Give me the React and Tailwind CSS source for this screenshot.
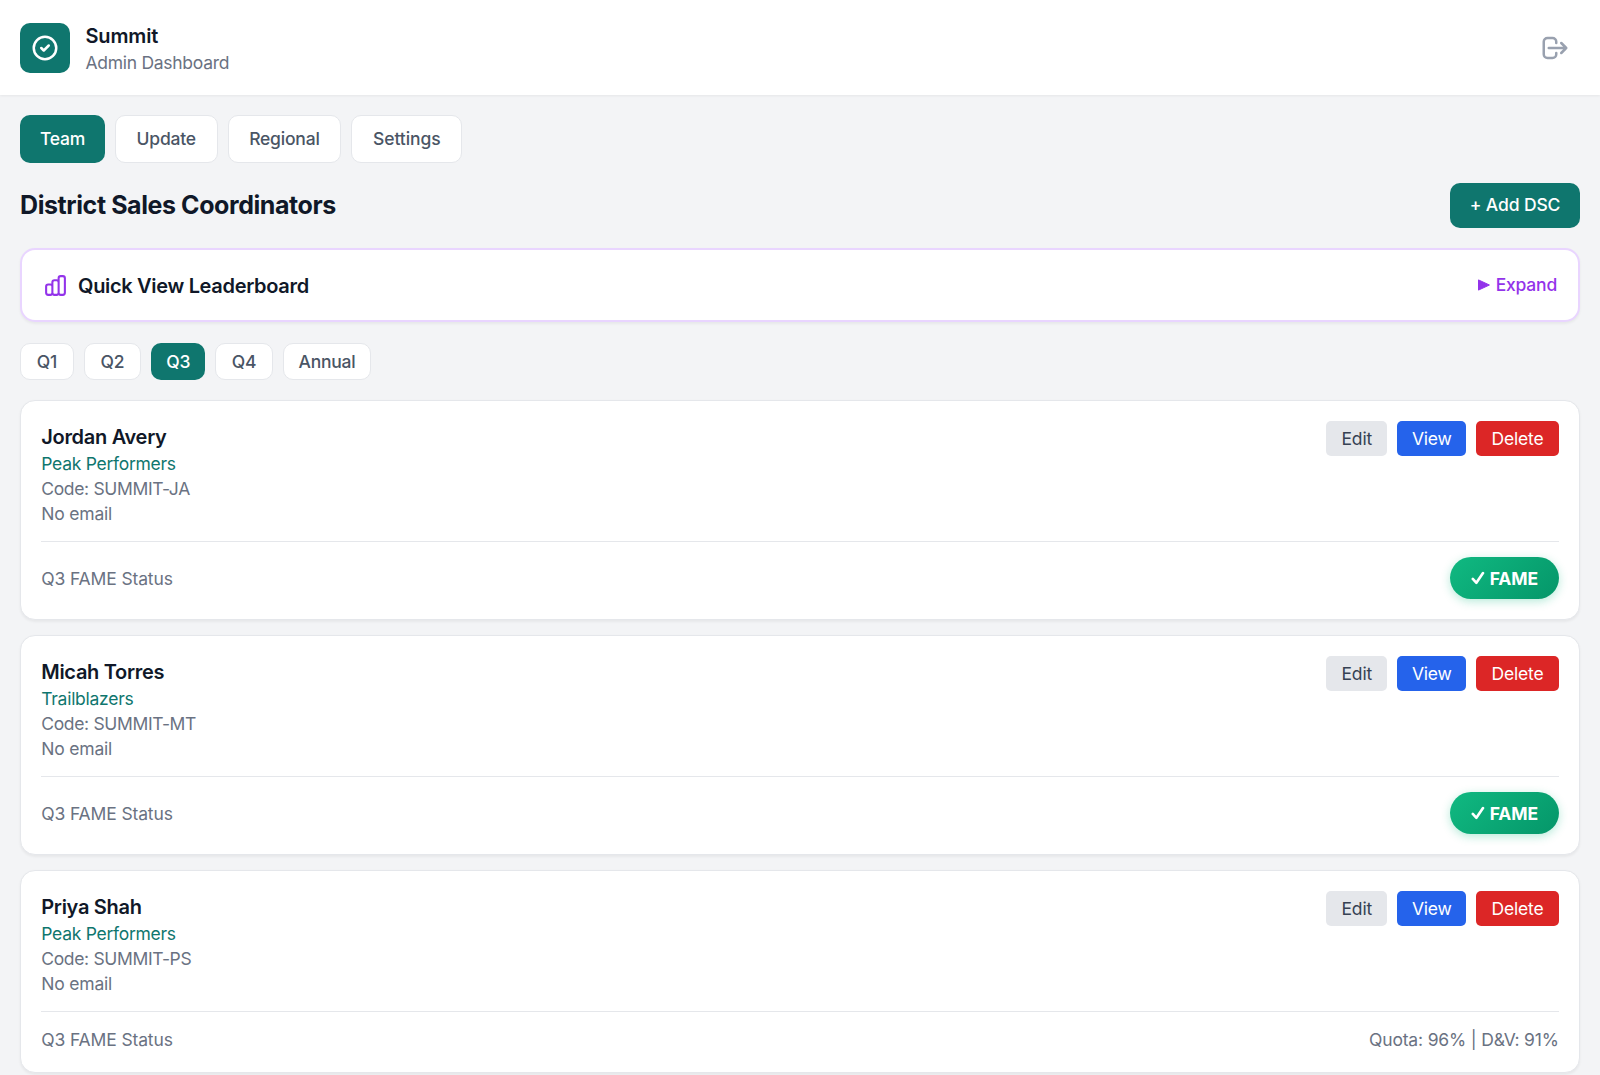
import React, { useState } from "react";

const tabs = [
  { name: "Team", width: "w-[85px]" },
  { name: "Update", width: "w-[102.5px]" },
  { name: "Regional", width: "w-[113.75px]" },
  { name: "Settings", width: "w-[111px] tracking-[-0.08px]" },
];

const quarters = [
  { name: "Q1", width: "w-[53.75px]" },
  { name: "Q2", width: "w-[57.5px]" },
  { name: "Q3", width: "w-[54px]" },
  { name: "Q4", width: "w-[57.5px]" },
  { name: "Annual", width: "w-[88.5px]" },
];

const coordinators = [
  { name: "Jordan Avery", team: "Peak Performers", code: "SUMMIT-JA", fame: true },
  { name: "Micah Torres", team: "Trailblazers", code: "SUMMIT-MT", fame: true },
  { name: "Priya Shah", team: "Peak Performers", code: "SUMMIT-PS", fame: false, quota: 96, dv: 91 },
];

const Icon = ({ d, className }) => (
  <svg
    className={className}
    viewBox="0 0 24 24"
    fill="none"
    stroke="currentColor"
    strokeWidth="2"
    strokeLinecap="round"
    strokeLinejoin="round"
  >
    <path d={d} />
  </svg>
);

const CoordinatorCard = ({ person, quarter }) => (
  <article className="rounded-[15px] border border-gray-200 bg-white px-[20.25px] pt-[20.25px] pb-5 shadow-[0_1.25px_2.5px_rgba(0,0,0,0.05)]">
    <div className="flex items-start justify-between">
      <div>
        <h3 className="pt-0.5 text-[20px] leading-[28px] font-semibold tracking-[-0.3px] text-gray-900">{person.name}</h3>
        <p className="tracking-[-0.27px] text-[#0f766e]">{person.team}</p>
        <p className="tracking-[-0.34px] text-gray-500">Code: {person.code}</p>
        <p className="text-gray-500">No email</p>
      </div>
      <div className="flex gap-2.5">
        <button className="h-[35px] w-[61px] rounded-[5px] bg-gray-200 text-gray-700">Edit</button>
        <button className="h-[35px] w-[69px] rounded-[5px] bg-[#2563eb] text-white">View</button>
        <button className="h-[35px] w-[82.5px] rounded-[5px] bg-[#dc2626] text-white">Delete</button>
      </div>
    </div>
    <div className="mt-[15px] flex items-center justify-between border-t border-gray-200 pt-[14.75px]">
      <span className="tracking-[-0.13px] text-gray-500">{quarter} FAME Status</span>
      {person.fame ? (
        <span className="flex h-[42px] w-[108.75px] items-center justify-center gap-[5px] rounded-full bg-linear-[135deg,#10b981,#059669] font-bold tracking-[-0.1px] text-white shadow-[0_2.5px_10px_rgba(16,185,129,0.3)]">
          <svg
            className="h-[14px] w-[14px]"
            viewBox="0 0 14 14"
            fill="none"
            stroke="currentColor"
            strokeWidth="2.6"
            strokeLinecap="round"
            strokeLinejoin="round"
          >
            <path d="M1.8 7.9 5.4 11.8 12 2" />
          </svg>
          FAME
        </span>
      ) : (
        <span className="tracking-[-0.17px] text-gray-500">
          Quota: {person.quota}% | D&amp;V: {person.dv}%
        </span>
      )}
    </div>
  </article>
);

const App = () => {
  const [tab, setTab] = useState("Team");
  const [quarter, setQuarter] = useState("Q3");

  return (
    <div className="h-screen overflow-hidden bg-gray-100 font-['Inter',sans-serif] text-[17.5px] leading-[25px] tracking-[-0.2px]">
      {/* Header */}
      <header className="flex h-[95px] items-center justify-between bg-white px-5 shadow-[0_1.25px_2.5px_rgba(0,0,0,0.06)]">
        <div className="flex items-center gap-[15.5px]">
          <div className="flex h-[50px] w-[50px] items-center justify-center rounded-[10px] bg-[#0f766e] text-white">
            <Icon className="h-[30px] w-[30px]" d="M9 12l2 2 4-4m6 2a9 9 0 11-18 0 9 9 0 0118 0z" />
          </div>
          <div>
            <h1 className="pt-0.5 text-[20px] leading-[28px] font-semibold tracking-[-0.15px] text-gray-900">Summit</h1>
            <p className="tracking-[-0.28px] text-gray-500">Admin Dashboard</p>
          </div>
        </div>
        <button className="p-2.5 text-gray-400">
          <Icon
            className="h-[30px] w-[30px]"
            d="M17 16l4-4m0 0l-4-4m4 4H7m6 4v1a3 3 0 01-3 3H6a3 3 0 01-3-3V7a3 3 0 013-3h4a3 3 0 013 3v1"
          />
        </button>
      </header>

      <main className="p-5">
        {/* Tabs */}
        <nav className="flex gap-2.5">
          {tabs.map(({ name, width }) => (
            <button
              key={name}
              onClick={() => setTab(name)}
              className={`h-[47.5px] rounded-[10px] font-medium ${width} ${
                tab === name ? "bg-[#0f766e] text-white" : "border border-gray-200 bg-white text-gray-600"
              }`}
            >
              {name}
            </button>
          ))}
        </nav>

        <div className="mt-5 flex items-center justify-between">
          <h2 className="text-[25px] leading-[35px] font-bold tracking-[-0.42px] text-gray-900">
            District Sales Coordinators
          </h2>
          <button className="h-[45px] w-[130px] rounded-[10px] bg-[#0f766e] pb-[1.5px] font-medium tracking-[-0.12px] text-white">
            + Add DSC
          </button>
        </div>

        {/* Leaderboard */}
        <section className="mt-5 flex h-[74.5px] items-center justify-between rounded-[15px] border-[2.5px] border-[#e9d5ff] bg-white px-[21px] shadow-[0_1.25px_2.5px_rgba(0,0,0,0.05)]">
          <div className="flex items-center gap-2.5">
            <Icon
              className="mt-px h-[25px] w-[25px] text-[#9333ea]"
              d="M9 19v-6a2 2 0 00-2-2H5a2 2 0 00-2 2v6a2 2 0 002 2h2a2 2 0 002-2zm0 0V9a2 2 0 012-2h2a2 2 0 012 2v10m-6 0a2 2 0 002 2h2a2 2 0 002-2m0 0V5a2 2 0 012-2h2a2 2 0 012 2v14a2 2 0 01-2 2h-2a2 2 0 01-2-2z"
            />
            <h3 className="pt-0.5 text-[20px] leading-[30px] font-semibold tracking-[-0.32px] text-gray-900">
              Quick View Leaderboard
            </h3>
          </div>
          <button className="flex items-center gap-[5.5px] pb-px font-medium text-[#9333ea]">
            <svg className="mt-px h-[12px] w-[12px]" viewBox="0 0 12 12" fill="currentColor">
              <path
                d="M.5.9v10.2L11.4 6z"
                stroke="currentColor"
                strokeWidth="1"
                strokeLinejoin="round"
              />
            </svg>
            Expand
          </button>
        </section>

        {/* Quarters */}
        <div className="mt-[20.5px] flex gap-2.5">
          {quarters.map(({ name, width }) => (
            <button
              key={name}
              onClick={() => setQuarter(name)}
              className={`h-[37.5px] rounded-[10px] font-medium ${width} ${
                quarter === name ? "bg-[#0f766e] text-white" : "border border-gray-200 bg-white text-gray-600"
              }`}
            >
              {name}
            </button>
          ))}
        </div>

        <div className="mt-5 flex flex-col gap-[15px]">
          {coordinators.map((person) => (
            <CoordinatorCard key={person.code} person={person} quarter={quarter} />
          ))}
        </div>
      </main>
    </div>
  );
};

export default App;
